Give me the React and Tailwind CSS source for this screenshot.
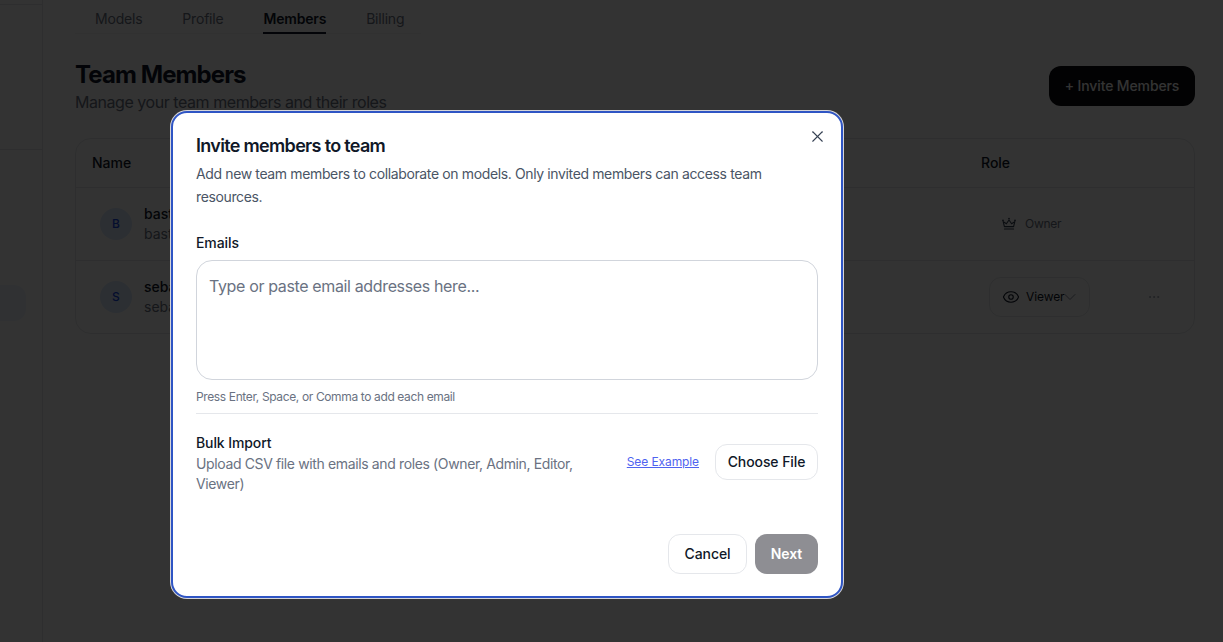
import { ChevronDown, Ellipsis, Eye, X } from 'lucide-react';

const tabs = ['Models', 'Profile', 'Members', 'Billing'];

const members = [
  { letter: 'B', name: 'bastian', email: 'bastian@example.com', role: 'Owner' },
  { letter: 'S', name: 'sebastian', email: 'sebastian@example.com', role: 'Viewer' },
];

// lucide's crown has no dots on its tips, so this one is drawn by hand
const CrownIcon = () => (
  <svg width="16" height="16" viewBox="0 0 16 16" fill="none" stroke="currentColor" strokeWidth="1.1" className="text-gray-700">
    <path d="M3.4 10.6 2.2 5.6l3.2 2.2L8 4l2.6 3.8 3.2-2.2-1.2 5z" strokeLinejoin="round" />
    <path d="M3.4 13h9.2" strokeLinecap="round" />
    <circle cx="2" cy="4.4" r="0.9" fill="currentColor" stroke="none" />
    <circle cx="8" cy="2.6" r="0.9" fill="currentColor" stroke="none" />
    <circle cx="14" cy="4.4" r="0.9" fill="currentColor" stroke="none" />
  </svg>
);

const MemberRow = ({ member }) => (
  <div className="grid h-[73px] grid-cols-[905px_1fr] items-center border-t border-gray-200">
    <div className="flex items-center gap-3 pl-6">
      <div className="flex h-8 w-8 items-center justify-center rounded-full bg-blue-100 text-xs font-medium text-blue-700">
        {member.letter}
      </div>
      <div>
        <p className="text-sm leading-5 font-medium text-gray-900">{member.name}</p>
        <p className="text-sm leading-5 text-gray-500">{member.email}</p>
      </div>
    </div>
    {member.role === 'Owner' ? (
      <div className="flex items-center gap-2 pl-5 text-xs tracking-[-0.3px] text-gray-500">
        <CrownIcon />
        Owner
      </div>
    ) : (
      <div className="flex items-center pl-2">
        <button className="flex h-10 w-[101px] items-center rounded-xl border border-gray-200 pl-[12px] text-xs tracking-[-0.1px] text-gray-900">
          <Eye size={18} strokeWidth={1.5} className="mr-[6px]" />
          Viewer
          <ChevronDown size={20} strokeWidth={1} className="-ml-1 text-gray-500" />
        </button>
        <Ellipsis size={14} strokeWidth={1.5} className="ml-[57px] text-gray-400" />
      </div>
    )}
  </div>
);

export default function App() {
  return (
    <div className="relative flex h-[642px] overflow-hidden bg-white font-['Inter',sans-serif] text-gray-900">
      <aside className="w-[43px] shrink-0 border-r border-gray-200 pt-1">
        <div className="h-[146px] border-t border-b border-gray-200" />
        <div className="mt-[135px] h-9 w-[26px] rounded-r-xl bg-blue-50" />
      </aside>

      <main className="flex-1 pr-7 pl-8">
        <nav className="flex h-[34px] w-[346px] gap-10 border-b border-gray-100 px-5 text-sm tracking-[-0.2px]">
          {tabs.map((tab) => (
            <span
              key={tab}
              className={
                tab === 'Members'
                  ? 'flex h-[34px] items-center border-b-2 border-gray-900 pt-[6px] font-semibold'
                  : 'flex h-[34px] items-center pt-[6px] pb-0.5 text-gray-500'
              }
            >
              {tab}
            </span>
          ))}
        </nav>

        <div className="mt-[32px] flex items-start justify-between">
          <div className="-mt-[8px]">
            <h1 className="text-2xl leading-[33px] font-bold tracking-[-0.9px]">Team Members</h1>
            <p className="text-base leading-[22px] tracking-[-0.45px] text-gray-500">
              Manage your team members and their roles
            </p>
          </div>
          <button className="h-10 w-[146px] rounded-xl bg-[#0a0a0f] text-sm font-medium tracking-[-0.13px] text-white">
            + Invite Members
          </button>
        </div>

        <section className="mt-[25px] overflow-hidden rounded-2xl border border-gray-200">
          <div className="grid h-[48px] grid-cols-[905px_1fr] items-center text-sm font-medium">
            <span className="pl-4">Name</span>
            <span>Role</span>
          </div>
          {members.map((member) => (
            <MemberRow key={member.letter} member={member} />
          ))}
        </section>
      </main>

      {/* Dialog */}
      <div className="absolute inset-0 bg-black/80 pt-[111px] pl-[171px]">
        <div className="relative h-[487px] w-[672px] rounded-2xl border-2 border-[#2f55c4] bg-white px-[23px] pt-[21px] shadow-[0_0_0_1px_#d4d4d8]">
          <button className="absolute top-[14px] right-[14px] text-gray-700">
            <X size={19} strokeWidth={1.4} />
          </button>

          <h2 className="text-lg leading-6 font-semibold tracking-[-0.68px] text-gray-900">Invite members to team</h2>
          <p className="mt-1 text-sm leading-[23px] tracking-[-0.37px] text-gray-600">
            Add new team members to collaborate on models. Only invited members can access team resources.
          </p>

          <label className="mt-[25px] block text-sm leading-5 font-medium tracking-[-0.1px] text-gray-900">Emails</label>
          <textarea
            className="mt-[7px] block h-[120px] w-full resize-none rounded-2xl border border-gray-300 px-3 pt-[13px] pb-3 text-base leading-6 tracking-[-0.36px] placeholder:text-gray-500"
            placeholder="Type or paste email addresses here..."
          />
          <p className="mt-[9px] text-xs leading-4 tracking-[-0.37px] text-gray-500">
            Press Enter, Space, or Comma to add each email
          </p>

          <div className="mt-2 flex items-start border-t border-gray-200 pt-[19px]">
            <div className="w-[400px]">
              <p className="text-sm leading-5 font-medium tracking-[-0.1px] text-gray-900">Bulk Import</p>
              <p className="mt-px text-sm leading-5 tracking-[-0.37px] text-gray-500">
                Upload CSV file with emails and roles (Owner, Admin, Editor, Viewer)
              </p>
            </div>
            <div className="mt-[11px] ml-auto flex items-center gap-4">
              <a className="text-xs tracking-[-0.1px] text-[#4f63f0] underline">See Example</a>
              <button className="h-9 w-[103px] rounded-xl border border-gray-200 text-sm font-medium tracking-[-0.08px] text-gray-900">
                Choose File
              </button>
            </div>
          </div>

          <div className="absolute right-[23px] bottom-[22px] flex gap-2">
            <button className="h-10 w-[79px] rounded-xl border border-gray-200 text-sm font-medium tracking-[-0.1px] text-gray-900">
              Cancel
            </button>
            <button className="h-10 w-[63px] rounded-xl bg-[#8e8e93] text-sm font-semibold tracking-[-0.1px] text-white">
              Next
            </button>
          </div>
        </div>
      </div>
    </div>
  );
}
